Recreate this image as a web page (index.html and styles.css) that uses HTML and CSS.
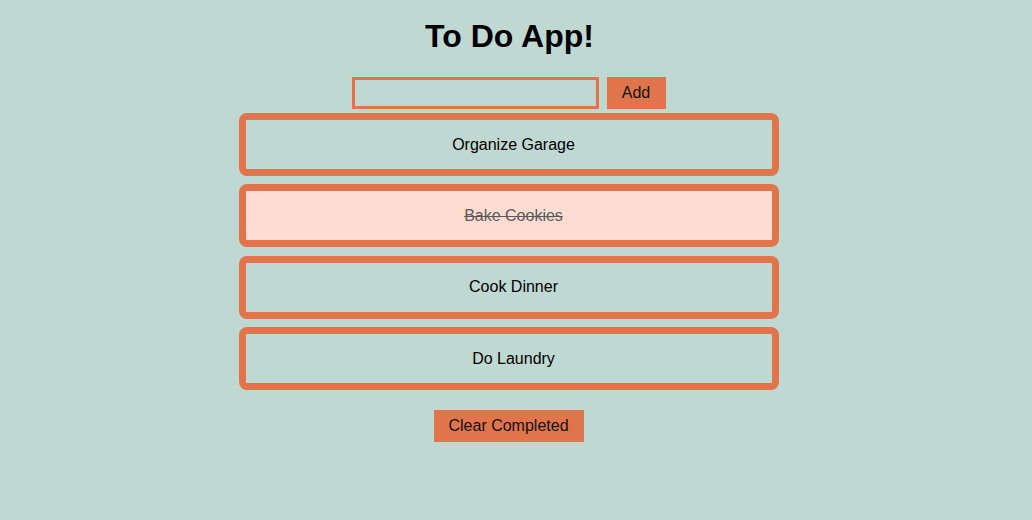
FILE: index.html
```html
<!DOCTYPE html>
<html>
<head>
<meta charset="utf-8">
<title>To Do App</title>
<link rel="stylesheet" href="styles.css">
</head>
<body>
<div class="app">
  <h1 class="title">To Do App!</h1>
  <form class="add-row">
    <input class="add-input" type="text">
    <button class="btn btn-add" type="button">Add</button>
  </form>
  <ul class="list">
    <li class="item">Organize Garage</li>
    <li class="item done"><span class="strike">Bake Cookies</span></li>
    <li class="item">Cook Dinner</li>
    <li class="item">Do Laundry</li>
  </ul>
  <div class="footer">
    <button class="btn btn-clear" type="button">Clear Completed</button>
  </div>
</div>
</body>
</html>
```

FILE: styles.css
```css
html, body {
  margin: 0;
  padding: 0;
  background: #bfd8d2;
}
body {
  font-family: "Liberation Sans", Arial, sans-serif;
  color: #000;
  padding-right: 15px;
  min-height: 520px;
}
.app {
  display: flex;
  flex-direction: column;
  align-items: center;
}
.title {
  font-size: 32px;
  font-weight: bold;
  margin: 18px 0 22px 2px;
  line-height: 37px;
}
.add-row {
  display: flex;
  gap: 8px;
  align-items: flex-start;
  margin: 0;
}
.add-input {
  box-sizing: border-box;
  width: 247px;
  height: 32px;
  border: 3px solid #e0754c;
  background: transparent;
  outline: none;
  padding: 0 4px;
  font-family: inherit;
  font-size: 16px;
}
.btn {
  box-sizing: border-box;
  height: 32px;
  border: none;
  background: #e0754c;
  color: #111;
  font-family: "Liberation Sans", Arial, sans-serif;
  font-size: 16px;
  padding: 0 14px;
  cursor: pointer;
}
.btn-add {
  width: 59px;
  padding: 0;
}
.list {
  list-style: none;
  margin: 4px 0 0;
  padding: 0;
  display: flex;
  flex-direction: column;
  gap: 8.4px;
}
.item {
  box-sizing: border-box;
  width: 540px;
  height: 63px;
  border: 7px solid #e0754c;
  border-radius: 8px;
  padding-left: 10px;
  display: flex;
  align-items: center;
  justify-content: center;
  font-size: 16px;
}
.item.done {
  background: #fedcd2;
}
.strike {
  text-decoration: line-through;
  color: #5a5a5a;
}
.footer {
  margin-top: 20px;
}
.btn-clear {
  width: 150px;
  padding: 0;
}
```
